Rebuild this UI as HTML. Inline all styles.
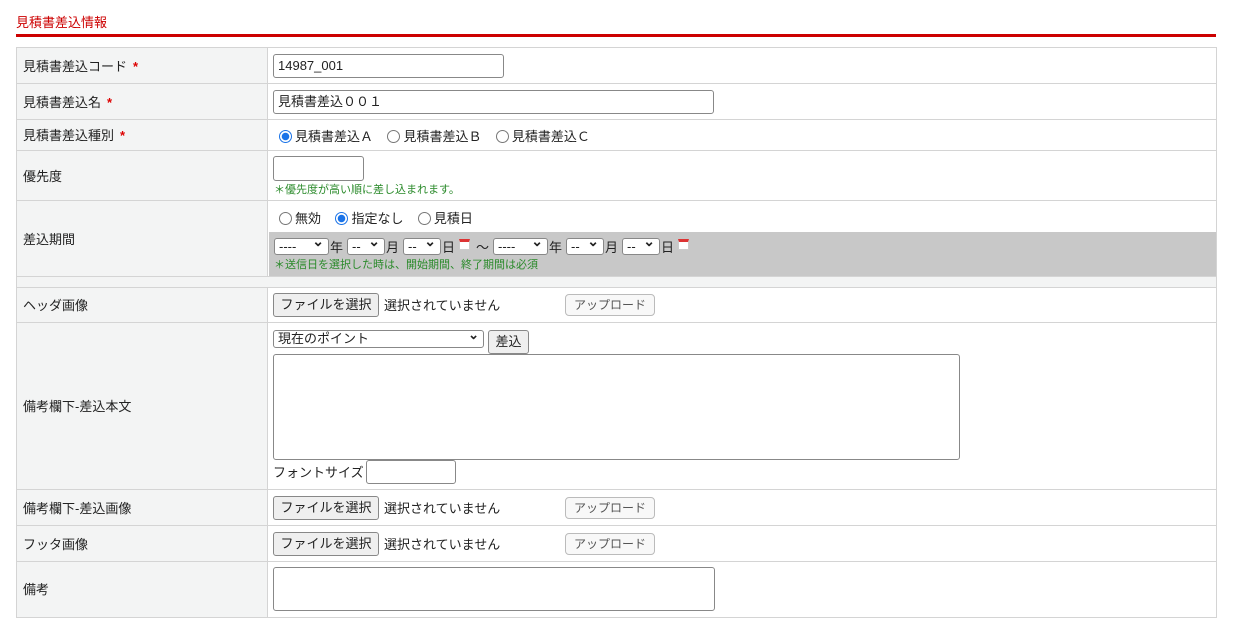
<!DOCTYPE html>
<html><head><meta charset="utf-8"><style>
body{margin:0;width:1234px;height:633px;background:#fff;font-family:"Liberation Sans","Noto Sans CJK JP",sans-serif;font-size:13px;line-height:16px;color:#222;position:relative;overflow:hidden}
.a{position:absolute}
.t{left:16px;top:15px;color:#c00;font-size:13px}
.line{left:16px;top:34px;width:1200px;height:3px;background:#c00}
.row{position:absolute;left:16px;width:1199px;border:1px solid #d4d4d4;border-bottom:none;background:#fff}
.lab{position:absolute;left:0;top:0;bottom:0;width:251px;background:#f3f4f4;border-right:1px solid #d4d4d4;display:flex;align-items:center;padding-left:6px;padding-top:1px;box-sizing:border-box}
.req{color:#d00;margin-left:6px;font-size:13px;font-weight:bold}
.inp{position:absolute;border:1px solid #888;border-radius:3px;background:#fff;box-sizing:border-box;padding-left:4px;line-height:20px;font-size:13px}
.btn{position:absolute;border:1px solid #888;border-radius:3px;background:#efefef;box-sizing:border-box;text-align:center;font-size:13px}
.up{position:absolute;border:1px solid #bbb;border-radius:4px;background:#f8f8f8;color:#555;box-sizing:border-box;text-align:center;font-size:12px;line-height:20px}
.rad{display:inline-block;width:11px;height:11px;border:1px solid #777;border-radius:50%;vertical-align:-2px;margin-right:3px;background:#fff}
.on{border:1px solid #1a73e8;background:radial-gradient(circle,#1a73e8 0 3.5px,#fff 4px)}
.sel{position:absolute;border:1px solid #888;border-radius:3px;background:#fff;box-sizing:border-box;height:17px;font-size:13px;line-height:15px;padding-left:4px}
.sel:after{content:"⌄";position:absolute;right:4px;top:-5px;font-size:14px;font-weight:bold}
.g{color:#2a8a2a;font-size:11px}
.cal{position:absolute;width:11px;height:11px;border:1px solid #ccc;background:#fff;border-top:3px solid #d33;box-sizing:border-box}
</style></head><body>
<div class="a t">見積書差込情報</div>
<div class="a line"></div>

<div class="row" style="top:47px;height:36px"><div class="lab">見積書差込コード<span class="req">*</span></div>
<div class="inp" style="left:256px;top:6px;width:231px;height:24px;line-height:22px">14987_001</div></div>

<div class="row" style="top:83px;height:36px"><div class="lab">見積書差込名<span class="req">*</span></div>
<div class="inp" style="left:256px;top:6px;width:441px;height:24px;line-height:22px">見積書差込００１</div></div>

<div class="row" style="top:119px;height:31px"><div class="lab">見積書差込種別<span class="req">*</span></div>
<div class="a" style="left:262px;top:9px"><span class="rad on"></span>見積書差込Ａ &nbsp; &nbsp;<span class="rad"></span>見積書差込Ｂ &nbsp; &nbsp;<span class="rad"></span>見積書差込Ｃ</div></div>

<div class="row" style="top:150px;height:50px"><div class="lab">優先度</div>
<div class="inp" style="left:256px;top:5px;width:91px;height:25px"></div>
<div class="a g" style="left:257px;top:31px">＊優先度が高い順に差し込まれます。</div></div>

<div class="row" style="top:200px;height:76px"><div class="lab">差込期間</div>
<div class="a" style="left:262px;top:10px"><span class="rad"></span>無効 &nbsp; &nbsp;<span class="rad on"></span>指定なし &nbsp; &nbsp;<span class="rad"></span>見積日</div>
<div class="a" style="left:252px;top:31px;width:947px;height:44px;background:#c8c8c8"></div>
<div class="sel" style="left:257px;top:37px;width:55px">----</div><div class="a" style="left:313px;top:39px">年</div>
<div class="sel" style="left:330px;top:37px;width:38px">--</div><div class="a" style="left:369px;top:39px">月</div>
<div class="sel" style="left:386px;top:37px;width:38px">--</div><div class="a" style="left:425px;top:39px">日</div>
<div class="cal" style="left:442px;top:38px"></div><div class="a" style="left:459px;top:39px">～</div>
<div class="sel" style="left:476px;top:37px;width:55px">----</div><div class="a" style="left:532px;top:39px">年</div>
<div class="sel" style="left:549px;top:37px;width:38px">--</div><div class="a" style="left:588px;top:39px">月</div>
<div class="sel" style="left:605px;top:37px;width:38px">--</div><div class="a" style="left:644px;top:39px">日</div>
<div class="cal" style="left:661px;top:38px"></div>
<div class="a g" style="left:257px;top:56px">＊送信日を選択した時は、開始期間、終了期間は必須</div></div>

<div class="row" style="top:276px;height:11px;background:#f3f4f4"></div>

<div class="row" style="top:287px;height:35px"><div class="lab">ヘッダ画像</div>
<div class="btn" style="left:256px;top:5px;width:106px;height:24px;line-height:22px">ファイルを選択</div>
<div class="a" style="left:367px;top:10px">選択されていません</div>
<div class="up" style="left:548px;top:6px;width:90px;height:22px">アップロード</div></div>

<div class="row" style="top:322px;height:167px"><div class="lab">備考欄下-差込本文</div>
<div class="inp" style="left:256px;top:7px;width:211px;height:18px;line-height:16px">現在のポイント<span style="position:absolute;right:4px;top:-4px;font-weight:bold">⌄</span></div>
<div class="btn" style="left:471px;top:7px;width:41px;height:24px;line-height:22px">差込</div>
<div class="inp" style="left:256px;top:31px;width:687px;height:106px"></div>
<div class="a" style="left:256px;top:142px">フォントサイズ</div>
<div class="inp" style="left:349px;top:137px;width:90px;height:24px"></div></div>

<div class="row" style="top:489px;height:36px"><div class="lab">備考欄下-差込画像</div>
<div class="btn" style="left:256px;top:6px;width:106px;height:24px;line-height:22px">ファイルを選択</div>
<div class="a" style="left:367px;top:11px">選択されていません</div>
<div class="up" style="left:548px;top:7px;width:90px;height:22px">アップロード</div></div>

<div class="row" style="top:525px;height:36px"><div class="lab">フッタ画像</div>
<div class="btn" style="left:256px;top:6px;width:106px;height:24px;line-height:22px">ファイルを選択</div>
<div class="a" style="left:367px;top:11px">選択されていません</div>
<div class="up" style="left:548px;top:7px;width:90px;height:22px">アップロード</div></div>

<div class="row" style="top:561px;height:55px;border-bottom:1px solid #d4d4d4"><div class="lab">備考</div>
<div class="inp" style="left:256px;top:5px;width:442px;height:44px"></div></div>
</body></html>
